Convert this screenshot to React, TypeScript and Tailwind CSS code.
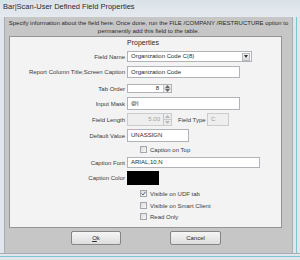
import React from 'react';

const font = { fontFamily: '"Liberation Sans", Arial, sans-serif' };

function Label({ text }: { text: string }) {
  return <div className="w-[117px] shrink-0 pr-[2px] text-right text-[6px] leading-[8px] text-[#3a3a3a]">{text}</div>;
}

function Box({ w, h, value, disabled = false, right = false }: { w: string; h: string; value: string; disabled?: boolean; right?: boolean }) {
  return (
    <div
      className={`${w} ${h} flex items-center border border-[#b0b3b8] px-[3px] text-[6px] ${
        disabled ? 'bg-[#eeeeee] text-[#9a9a9a] border-[#cacccf]' : 'bg-white text-[#2a2a2a]'
      } ${right ? 'justify-end' : ''}`}
    >
      {value}
    </div>
  );
}

function Spinner({ disabled = false }: { disabled?: boolean }) {
  const c = disabled ? '#b8b8b8' : '#666';
  return (
    <div className="flex h-full w-[8px] shrink-0 flex-col border-l border-[#c5c7ca] bg-[#ececec]">
      <div className="flex flex-1 items-center justify-center border-b border-[#c5c7ca]">
        <svg width="5" height="3" viewBox="0 0 5 3"><path d="M0 3 L2.5 0 L5 3 Z" fill={c} /></svg>
      </div>
      <div className="flex flex-1 items-center justify-center">
        <svg width="5" height="3" viewBox="0 0 5 3"><path d="M0 0 L2.5 3 L5 0 Z" fill={c} /></svg>
      </div>
    </div>
  );
}

function Check({ checked = false, label }: { checked?: boolean; label: string }) {
  return (
    <div className="flex h-[7px] items-center">
      <div className="ml-[130px] flex h-[7px] w-[7px] items-center justify-center border border-[#a3a7ad] bg-gradient-to-br from-[#dcdcdc] to-[#f8f8f8]">
        {checked && (
          <svg width="5" height="5" viewBox="0 0 5 5"><path d="M0.5 2.5 L2 4 L4.5 0.8" stroke="#55657a" strokeWidth="1" fill="none" /></svg>
        )}
      </div>
      <span className="ml-[3px] text-[6px] leading-[8px] text-[#3a3a3a]">{label}</span>
    </div>
  );
}

function Button({ text, ul, w }: { text: string; ul: string; w: string }) {
  const rest = text.slice(ul.length);
  return (
    <div className={`${w} flex h-[14px] items-center justify-center rounded-[2px] border border-[#858585] bg-gradient-to-b from-[#f6f6f6] to-[#dddddd] text-[6px] text-[#2a2a2a]`}>
      <span className="underline">{ul}</span>
      {rest}
    </div>
  );
}

export default function App() {
  return (
    <div className="flex h-[260px] w-[300px] flex-col overflow-hidden bg-[#e0e6eb]" style={font}>
      {/* title bar */}
      <div className="flex h-[17px] shrink-0 items-center bg-gradient-to-b from-[#dae2e9] to-[#e4eaef] pb-[3px] pl-[3px] text-[7.5px] text-[#2a2a2a]">
        Bar|Scan-User Defined Field Properties
      </div>

      <div className="flex h-[236px] shrink-0">
        <div className="w-[5px] shrink-0 border-r border-[#a7adb3]" />
        <div className="flex w-[287px] shrink-0 flex-col bg-[#c6c6c6]">
          <div className="pt-[2px] text-center text-[6px] leading-[8px] text-[#2a2a2a]">
            <div>Specify information about the field here. Once done, run the FILE /COMPANY /RESTRUCTURE option to</div>
            <div>permanently add this field to the table.</div>
          </div>

          {/* properties panel */}
          <div className="ml-[4px] mt-[1px] h-[192px] w-[273px] border border-[#959595] bg-[#f3f3f3]">
            <div className="mt-[2px] h-[8px] pl-[117px] text-[7px] leading-[8px] text-[#2a2a2a]">Properties</div>

            <div className="mt-[4px] flex h-[11px] items-center">
              <Label text="Field Name" />
              <div className="flex h-[11px] w-[125px] items-center border border-[#b0b3b8] bg-white pl-[3px] text-[6px] text-[#2a2a2a]">
                <span className="flex-1">Organization Code C(8)</span>
                <div className="mr-[1px] flex h-[8px] w-[8px] items-center justify-center border border-[#b5b8bc] bg-gradient-to-b from-[#f3f3f3] to-[#dcdcdc]">
                  <svg width="4" height="3" viewBox="0 0 4 3"><path d="M0 0 L2 3 L4 0 Z" fill="#333" /></svg>
                </div>
              </div>
            </div>

            <div className="mt-[4px] flex h-[12px] items-center">
              <Label text="Report Column Title;Screen Caption" />
              <Box w="w-[113px]" h="h-[12px]" value="Organization Code" />
            </div>

            <div className="mt-[6px] flex h-[9px] items-center">
              <Label text="Tab Order" />
              <div className="flex h-[9px] w-[45px] items-stretch border border-[#b0b3b8] bg-white text-[6px] text-[#2a2a2a]">
                <div className="flex flex-1 items-center justify-end pr-[4px]">8</div>
                <Spinner />
              </div>
            </div>

            <div className="mt-[4px] flex h-[13px] items-center">
              <Label text="Input Mask" />
              <Box w="w-[113px]" h="h-[13px]" value="@|" />
            </div>

            <div className="mt-[3px] flex h-[13px] items-center">
              <Label text="Field Length" />
              <div className="flex h-[13px] w-[45px] items-stretch border border-[#cacccf] bg-[#eeeeee] text-[6px] text-[#a0a0a0]">
                <div className="flex flex-1 items-center justify-end pr-[3px]">5.00</div>
                <Spinner disabled />
              </div>
              <span className="ml-[6px] w-[29px] text-[6px] leading-[8px] text-[#3a3a3a]">Field Type</span>
              <Box w="w-[22px]" h="h-[13px]" value="C" disabled />
            </div>

            <div className="mt-[3px] flex h-[13px] items-center">
              <Label text="Default Value" />
              <Box w="w-[62px]" h="h-[13px]" value="UNASSIGN" />
            </div>

            <div className="mt-[4px]">
              <Check label="Caption on Top" />
            </div>

            <div className="mt-[4px] flex h-[11px] items-center">
              <Label text="Caption Font" />
              <Box w="w-[133px]" h="h-[11px]" value="ARIAL,10,N" />
            </div>

            <div className="mt-[3px] flex h-[14px] items-center">
              <Label text="Caption Color" />
              <div className="h-[14px] w-[32px] bg-black" />
            </div>

            <div className="mt-[5px]">
              <Check checked label="Visible on UDF tab" />
            </div>
            <div className="mt-[5px]">
              <Check label="Visible on Smart Client" />
            </div>
            <div className="mt-[4px]">
              <Check label="Read Only" />
            </div>
          </div>

          <div className="mt-[3px] flex">
            <div className="ml-[66px]">
              <Button text="Ok" ul="O" w="w-[50px]" />
            </div>
            <div className="ml-[49px]">
              <Button text="Cancel" ul="" w="w-[51px]" />
            </div>
          </div>
        </div>
        <div className="w-[8px] shrink-0 border-l border-[#a7adb3] pl-[3px]">
          <div className="h-full w-[1px] bg-[#7cc6cf]" />
        </div>
      </div>

      <div className="h-[7px] shrink-0 border-t border-[#a7adb3] pt-[2px]">
        <div className="h-[1px] w-full bg-[#7cc6cf]" />
      </div>
    </div>
  );
}
